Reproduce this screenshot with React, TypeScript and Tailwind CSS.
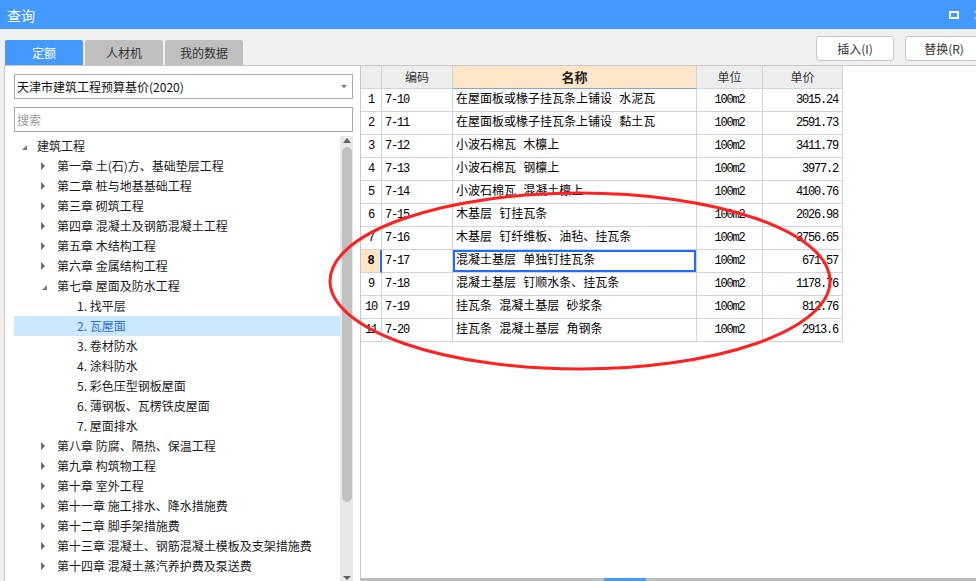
import React from 'react';

type TreeNode = { level: number; text: string; open?: boolean; selected?: boolean };

const tree: TreeNode[] = [
  { level: 0, text: '建筑工程', open: true },
  { level: 1, text: '第一章 土(石)方、基础垫层工程' },
  { level: 1, text: '第二章 桩与地基基础工程' },
  { level: 1, text: '第三章 砌筑工程' },
  { level: 1, text: '第四章 混凝土及钢筋混凝土工程' },
  { level: 1, text: '第五章 木结构工程' },
  { level: 1, text: '第六章 金属结构工程' },
  { level: 1, text: '第七章 屋面及防水工程', open: true },
  { level: 2, text: '1. 找平层' },
  { level: 2, text: '2. 瓦屋面', selected: true },
  { level: 2, text: '3. 卷材防水' },
  { level: 2, text: '4. 涂料防水' },
  { level: 2, text: '5. 彩色压型钢板屋面' },
  { level: 2, text: '6. 薄钢板、瓦楞铁皮屋面' },
  { level: 2, text: '7. 屋面排水' },
  { level: 1, text: '第八章 防腐、隔热、保温工程' },
  { level: 1, text: '第九章 构筑物工程' },
  { level: 1, text: '第十章 室外工程' },
  { level: 1, text: '第十一章 施工排水、降水措施费' },
  { level: 1, text: '第十二章 脚手架措施费' },
  { level: 1, text: '第十三章 混凝土、钢筋混凝土模板及支架措施费' },
  { level: 1, text: '第十四章 混凝土蒸汽养护费及泵送费' },
];

const rows = [
  ['7-10', '在屋面板或椽子挂瓦条上铺设 水泥瓦', '100m2', '3015.24'],
  ['7-11', '在屋面板或椽子挂瓦条上铺设 黏土瓦', '100m2', '2591.73'],
  ['7-12', '小波石棉瓦 木檩上', '100m2', '3411.79'],
  ['7-13', '小波石棉瓦 钢檩上', '100m2', '3977.2'],
  ['7-14', '小波石棉瓦 混凝土檩上', '100m2', '4100.76'],
  ['7-15', '木基层 钉挂瓦条', '100m2', '2026.98'],
  ['7-16', '木基层 钉纤维板、油毡、挂瓦条', '100m2', '3756.65'],
  ['7-17', '混凝土基层 单独钉挂瓦条', '100m2', '671.57'],
  ['7-18', '混凝土基层 钉顺水条、挂瓦条', '100m2', '1178.76'],
  ['7-19', '挂瓦条 混凝土基层 砂浆条', '100m2', '812.76'],
  ['7-20', '挂瓦条 混凝土基层 角钢条', '100m2', '2913.6'],
];

const indent = ['pl-[8px]', 'pl-[28px]', 'pl-[48px]'];
const cell = 'flex items-center border-r border-b border-[#d4d4d4] overflow-hidden whitespace-nowrap';
const mono = "font-['Liberation_Mono',monospace] tracking-[-1.2px]";

function TreeRow({ node }: { node: TreeNode }) {
  return (
    <div
      className={`flex h-[20px] shrink-0 items-center ${indent[node.level]} ${
        node.selected ? 'bg-[#cce8ff] text-[#2d6fe0]' : 'text-[#1a1a1a]'
      }`}
    >
      <div className="flex w-[15px] shrink-0 items-center">
        {node.level < 2 &&
          (node.open ? (
            <svg width="5" height="5" viewBox="0 0 5 5" className="mt-[3px]">
              <path d="M5 0 L5 5 L0 5 Z" fill="#7a7a7a" />
            </svg>
          ) : (
            <svg width="4" height="8" viewBox="0 0 4 8" className="-ml-[1px]">
              <path d="M0 0 L4 4 L0 8 Z" fill="#6a6a6a" />
            </svg>
          ))}
      </div>
      <span className="leading-[20px] whitespace-nowrap">{node.text}</span>
    </div>
  );
}

export default function App() {
  return (
    <div className="relative flex h-[581px] w-[976px] flex-col overflow-hidden bg-[#f0f0f0] font-['Noto_Sans_CJK_SC',sans-serif] text-[12px]">
      {/* Title bar */}
      <div className="flex h-[29px] shrink-0 items-center bg-[#4399fd] pl-[7px] text-white">
        <span className="text-[14px] leading-none">查询</span>
        <div className="ml-auto mr-[15px] h-[8px] w-[10px] shrink-0 border-2 border-white" />
        <svg width="10" height="8" viewBox="0 0 10 8" className="-mr-[8px] shrink-0">
          <path d="M1 0 L9 8 M9 0 L1 8" stroke="white" strokeWidth="1.5" />
        </svg>
      </div>

      {/* Tabs + actions */}
      <div className="flex h-[36px] shrink-0">
        <div className="ml-[5px] mt-[11px] flex gap-[2px]">
          <div className="flex h-[25px] w-[78px] items-center justify-center rounded-t-[2px] bg-[#4399fd] text-white">定额</div>
          <div className="flex h-[25px] w-[78px] items-center justify-center rounded-t-[2px] bg-[#bfbfbf] text-[#333]">人材机</div>
          <div className="flex h-[25px] w-[78px] items-center justify-center rounded-t-[2px] bg-[#bfbfbf] text-[#333]">我的数据</div>
        </div>
        <div className="-mr-[7px] ml-auto mt-[7px] flex gap-[11px]">
          <button className="flex h-[25px] w-[78px] items-center justify-center rounded-[3px] border border-[#c5c5c5] bg-white text-[#333]">插入(I)</button>
          <button className="flex h-[25px] w-[78px] items-center justify-center rounded-[3px] border border-[#c5c5c5] bg-white text-[#333]">替换(R)</button>
        </div>
      </div>

      {/* Main */}
      <div className="ml-[4px] flex min-h-0 flex-1 border-t border-[#c8c8c8]">
        {/* Left panel */}
        <div className="flex w-[356px] shrink-0 flex-col border-l border-[#c8c8c8] bg-white">
          <div className="ml-[9px] mr-[7px] mt-[8px] flex h-[25px] shrink-0 items-center border border-[#a9a9a9] pl-[2px] pr-[5px] text-[#111]">
            <span className="leading-none">天津市建筑工程预算基价(2020)</span>
            <svg width="6" height="3" viewBox="0 0 6 3" className="ml-auto">
              <path d="M0 0 L6 0 L3 3 Z" fill="#707070" />
            </svg>
          </div>
          <div className="ml-[9px] mr-[7px] mt-[8px] flex h-[25px] shrink-0 items-center border border-[#a9a9a9] pl-[2px] text-[#9a9a9a]">
            搜索
          </div>
          <div className="ml-[9px] mt-[4px] flex min-h-0 flex-1">
            <div className="flex w-[326px] shrink-0 flex-col overflow-hidden">
              {tree.map((n, i) => (
                <TreeRow key={i} node={n} />
              ))}
            </div>
            {/* Scrollbar */}
            <div className="flex w-[13px] shrink-0 flex-col items-center bg-[#e8e8e8]">
              <svg width="8" height="5" viewBox="0 0 8 5" className="mt-[2px] shrink-0">
                <path d="M0 5 L4 0 L8 5 Z" fill="#5f5f66" />
              </svg>
              <div className="mt-[4px] h-[355px] w-[10px] shrink-0 rounded-[5px] bg-[#c1c1c1]" />
              <svg width="8" height="4" viewBox="0 0 8 4" className="mb-[1px] mt-auto shrink-0">
                <path d="M0 0 L8 0 L4 4 Z" fill="#5f5f66" />
              </svg>
            </div>
          </div>
        </div>

        {/* Right pane */}
        <div className="flex min-w-0 flex-1 flex-col border-l border-[#c8c8c8] bg-white">
          <div className="grid grid-cols-[21px_71px_244px_66px_80px] auto-rows-[23px] text-black">
            <div className={`${cell} bg-[#ededed]`} />
            <div className={`${cell} justify-center bg-[#ededed] text-[#333]`}>编码</div>
            <div className={`${cell} justify-center border-b-[#7aa7e8] bg-[#fde6c8] text-[13px] font-bold text-[#222]`}>名称</div>
            <div className={`${cell} justify-center bg-[#ededed] text-[#333]`}>单位</div>
            <div className={`${cell} justify-center bg-[#ededed] text-[#333]`}>单价</div>
            {rows.map((r, i) => {
              const sel = i === 7;
              return (
                <React.Fragment key={i}>
                  <div
                    className={`${cell} justify-center ${mono} ${
                      sel ? 'border-r-2 border-r-[#1a6dff] bg-[#fde5c6] font-bold' : ''
                    }`}
                  >
                    {i + 1}
                  </div>
                  <div className={`${cell} pl-[3px] ${mono}`}>{r[0]}</div>
                  <div
                    className={`${cell} pl-[3px] font-['Liberation_Mono','Noto_Sans_CJK_SC',monospace] ${
                      sel ? 'shadow-[inset_0_0_0_2px_#1a6dff]' : ''
                    }`}
                  >
                    {r[1]}
                  </div>
                  <div className={`${cell} justify-center ${mono}`}>{r[2]}</div>
                  <div className={`${cell} justify-end pr-[4px] ${mono}`}>{r[3]}</div>
                </React.Fragment>
              );
            })}
          </div>
          <div className="flex-1" />
          <div className="flex h-[3px] shrink-0 bg-[#bdbdbd]">
            <div className="ml-[243px] h-full w-[42px] bg-[#4399fd]" />
          </div>
        </div>
      </div>

      {/* Red hand-drawn annotation */}
      <svg className="pointer-events-none absolute left-0 top-0" width="976" height="581" viewBox="0 0 976 581">
        <ellipse cx="580" cy="281" rx="250" ry="88" fill="none" stroke="#ff2020" strokeWidth="3" />
      </svg>
    </div>
  );
}
